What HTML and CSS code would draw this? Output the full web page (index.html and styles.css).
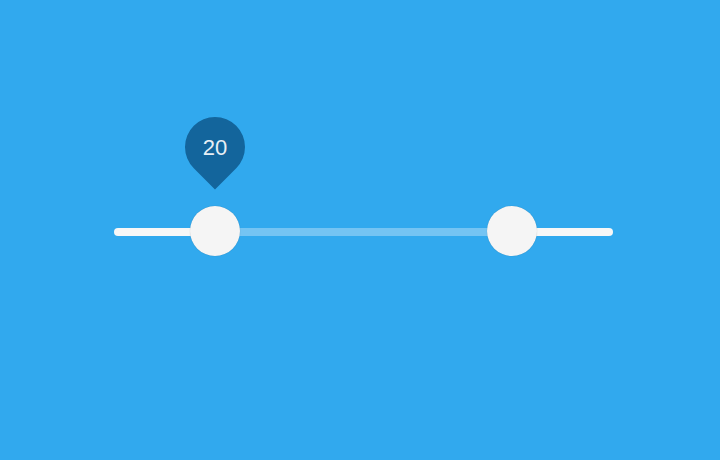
FILE: index.html
```
<!DOCTYPE html>
<html lang="en">
<head>
    <meta charset="UTF-8">
    <meta name="viewport" content="width=device-width, initial-scale=1.0">
    <title>Range slider</title>
    <link rel="stylesheet" href="styles.css">
</head>
<body>
    <div class="page">
        <div class="slider">
            <div class="track"></div>
            <!-- selected range between the two handles -->
            <div class="range" style="left: 20.2%; width: 59.5%;"></div>
            <div class="handle" style="left: 20.2%;">
                <div class="pin"><span>20</span></div>
            </div>
            <div class="handle" style="left: 79.7%;"></div>
        </div>
    </div>
</body>
</html>
```
FILE: styles.css
```
html, body {
    margin: 0;
    height: 100%;
}
body {
    background-color: #31a9ee;
    font-family: "Liberation Sans", Arial, sans-serif;
}
.page {
    padding: 228px 107px 0 114px;
}
.slider {
    position: relative;
    height: 8px;
}
.track {
    height: 8px;
    border-radius: 4px;
    background-color: #f7f7f7;
}
.range {
    position: absolute;
    top: 0;
    height: 8px;
    background-color: #74c4f3;
}
.handle {
    position: absolute;
    top: 3px;
    width: 50px;
    height: 50px;
    margin: -25px 0 0 -25px;
    border-radius: 50%;
    background-color: #f5f5f5;
    box-shadow: 0 0 1px rgba(0, 0, 0, 0.25);
}
.pin {
    position: absolute;
    left: -5px;
    top: -89px;
    width: 60px;
    height: 60px;
    border-radius: 50% 50% 0 50%;
    background-color: #13659c;
    transform: rotate(45deg);
}
.pin span {
    display: block;
    width: 60px;
    line-height: 60px;
    text-align: center;
    color: #e8eff5;
    font-size: 22px;
    transform: rotate(-45deg) translateY(1px);
}
```
